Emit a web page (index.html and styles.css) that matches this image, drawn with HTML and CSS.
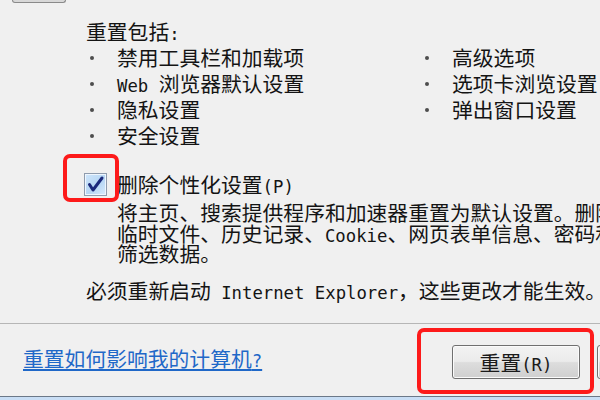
FILE: index.html
```html
<!DOCTYPE html>
<html lang="zh-CN">
<head>
<meta charset="utf-8">
<title>重置 Internet Explorer 设置</title>
<link rel="stylesheet" href="styles.css">
</head>
<body>
<div class="dialog">
  <div class="prev-btn"></div>
  <div class="content">
    <div class="heading">重置包括<span class="m">:</span></div>
    <ul class="items">
      <li>禁用工具栏和加载项</li>
      <li>高级选项</li>
      <li><span class="m">Web </span>浏览器默认设置</li>
      <li>选项卡浏览设置</li>
      <li>隐私设置</li>
      <li>弹出窗口设置</li>
      <li>安全设置</li>
    </ul>
    <div class="check-row">
      <span class="checkbox">
        <svg width="21" height="21" viewBox="0 0 21 21"><path d="M4.5 10.5 L8 16 L17 4" fill="none" stroke="#1b2a7c" stroke-width="3" stroke-linecap="round" stroke-linejoin="round"/></svg>
      </span>
      <span class="check-label">删除个性化设置<span class="m">(P)</span></span>
    </div>
    <p class="desc">将主页、搜索提供程序和加速器重置为默认设置。删除<br>临时文件、历史记录、<span class="m">Cookie</span>、网页表单信息、密码和<span class="m"> InPrivate</span><br>筛选数据。</p>
    <p class="note">必须重新启动<span class="m"> Internet Explorer</span>，这些更改才能生效。</p>
  </div>
  <div class="footer">
    <a class="help-link" href="#">重置如何影响我的计算机<span class="m">?</span></a>
    <div class="buttons">
      <button class="btn" type="button">重置<span class="m">(R)</span></button>
      <button class="btn" type="button">取消</button>
    </div>
  </div>
  <div class="taskbar"></div>
  <div class="highlight hl-check"></div>
  <div class="highlight hl-button"></div>
</div>
</body>
</html>
```
FILE: styles.css
```css
html, body {
  margin: 0;
  padding: 0;
  overflow: hidden;
  background: #f0f0f0;
}

.dialog {
  position: relative;
  width: 680px;
  height: 400px;
  background: #f0f0f0;
  font-family: "Noto Sans CJK SC", "Noto Sans CJK TC", sans-serif;
  font-size: 20.8px;
  color: #141414;
  overflow: hidden;
}

.m {
  font-family: "DejaVu Sans Mono", "Liberation Mono", monospace;
  font-size: 17.3px;
  line-height: 0;
}

.prev-btn {
  margin-left: 12px;
  width: 54px;
  height: 3px;
  box-sizing: border-box;
  border: 1px solid #8a8a8a;
  border-top: none;
  border-radius: 0 0 3px 3px;
  background: #d8d8d8;
}

.content {
  padding-left: 86px;
}

.heading {
  margin-top: 15px;
  height: 26px;
  line-height: 26px;
  white-space: nowrap;
}

.items {
  list-style: none;
  margin: 0;
  padding: 0;
  display: grid;
  grid-template-columns: 335px auto;
  grid-auto-rows: 26px;
}

.items li {
  white-space: pre;
  line-height: 26px;
  height: 26px;
}

.items li::before {
  content: "";
  display: inline-block;
  vertical-align: middle;
  position: relative;
  top: -2px;
  width: 4px;
  height: 4px;
  border-radius: 50%;
  background: #4d4d4d;
  margin-left: 4px;
  margin-right: 23px;
}

.check-row {
  margin-top: 23px;
  height: 26px;
  display: flex;
  align-items: center;
  line-height: 26px;
  white-space: nowrap;
}

.checkbox {
  width: 23px;
  height: 23px;
  box-sizing: border-box;
  margin-left: -2px;
  margin-right: 10px;
  border: 1px solid #8e9bad;
  background: linear-gradient(135deg, #cfe6fb 0%, #b6d6f4 55%, #d9ecfc 100%);
  box-shadow: inset 0 0 0 1px #eef6fe;
  display: flex;
  align-items: center;
  justify-content: center;
}

.checkbox svg {
  display: block;
}

.desc {
  margin: 5px 0 0 31px;
  height: 61.5px;
  line-height: 20.5px;
  white-space: nowrap;
}

.note {
  margin: 13.5px 0 0 0;
  height: 26px;
  line-height: 26px;
  white-space: nowrap;
}

.footer {
  margin-top: 20px;
  height: 73px;
  box-sizing: border-box;
  border-top: 1px solid #b6b6b6;
  padding: 21px 3px 0 23px;
  display: flex;
  align-items: flex-start;
}

.help-link {
  line-height: 26px;
  color: #1f68c8;
  text-decoration: underline;
  white-space: nowrap;
}

.buttons {
  margin-left: auto;
  display: flex;
  gap: 17px;
}

.btn {
  width: 128px;
  height: 34px;
  box-sizing: border-box;
  padding: 0;
  border: 1px solid #707070;
  border-radius: 3px;
  background: linear-gradient(#f3f3f3 0%, #ebebeb 48%, #dddddd 52%, #cfcfcf 100%);
  box-shadow: inset 0 0 0 1px #fbfbfb;
  font-family: "Noto Sans CJK SC", sans-serif;
  font-size: 20.8px;
  color: #1a1a1a;
  line-height: 30px;
  white-space: nowrap;
}

.btn + .btn {
  width: 80px;
}

.taskbar {
  height: 4px;
  box-sizing: border-box;
  border-top: 1px solid #6b7888;
  background: #c9def5;
}

.highlight {
  position: absolute;
  box-sizing: border-box;
  border: 4px solid #fd1a1a;
  border-radius: 7px;
}

.hl-check {
  left: 63px;
  top: 154px;
  width: 56px;
  height: 48px;
}

.hl-button {
  left: 417px;
  top: 328px;
  width: 177px;
  height: 66px;
}
```
